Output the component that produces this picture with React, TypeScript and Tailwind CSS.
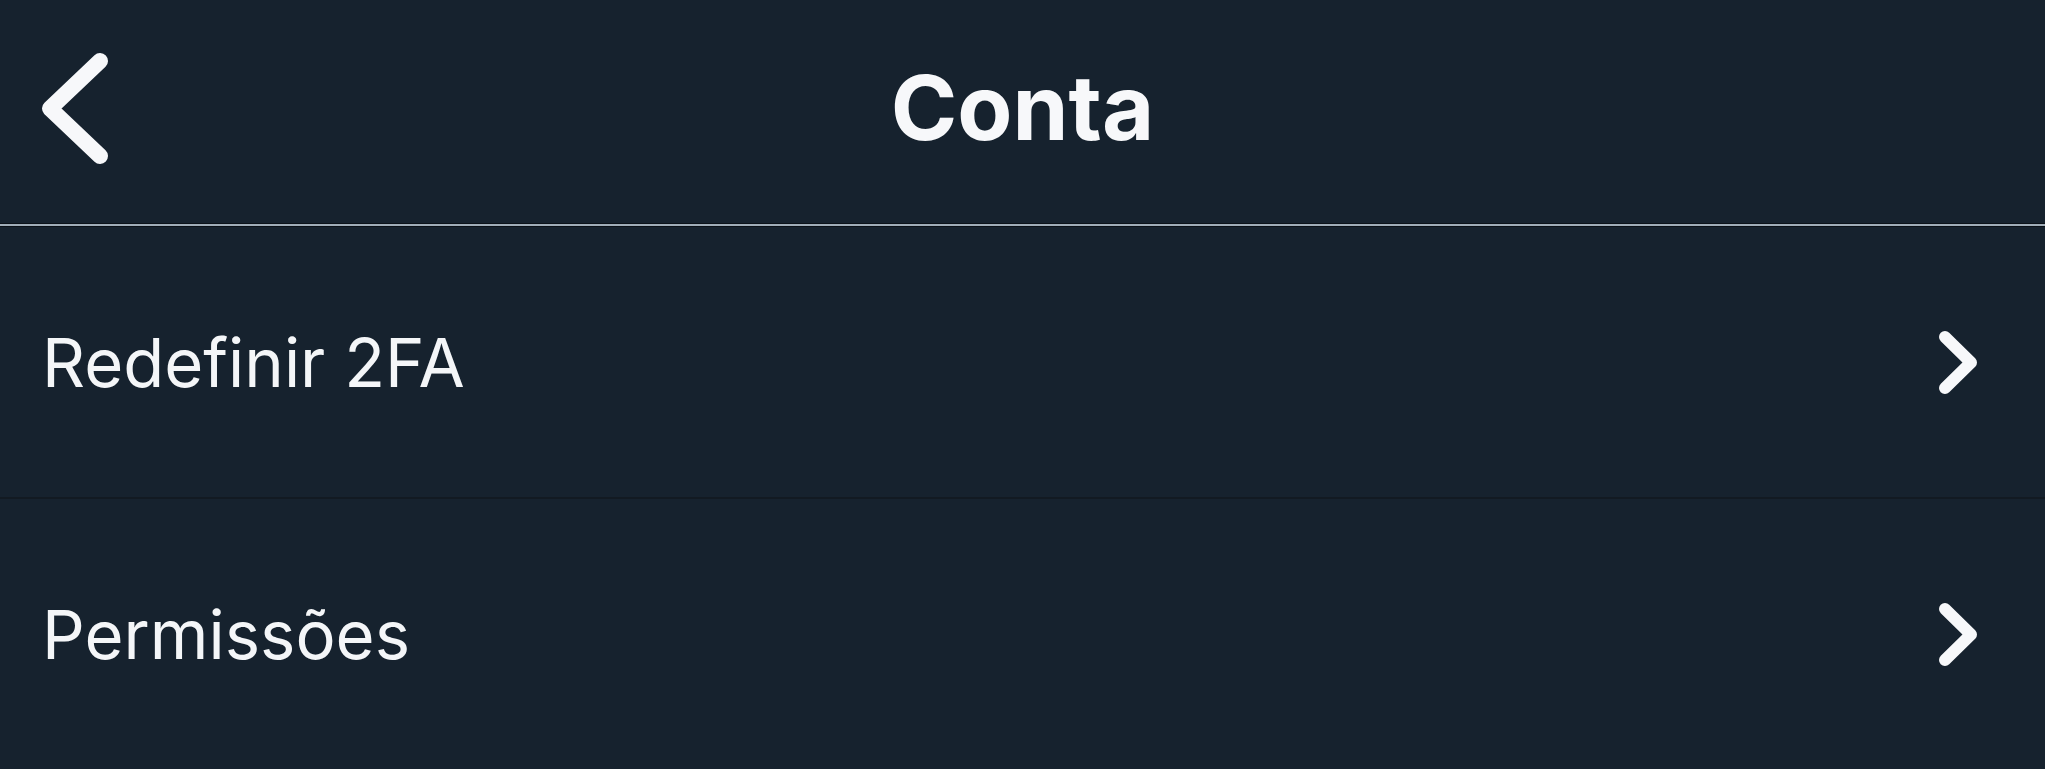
import React from "react";

function BackChevron() {
  return (
    <svg width="66" height="111" viewBox="0 0 66 111" fill="none" stroke="#f7f8fa" strokeWidth={16} strokeLinecap="round" strokeLinejoin="round">
      <path d="M58 8L8 55.5L58 103" />
    </svg>
  );
}

function RowChevron() {
  return (
    <svg width="38" height="63" viewBox="0 0 38 63" fill="none" stroke="#f7f8fa" strokeWidth={12} strokeLinecap="round" strokeLinejoin="round">
      <path d="M6 6L32 31.5L6 57" />
    </svg>
  );
}

function Row({ label }: { label: string }) {
  return (
    <div className="flex h-[270px] items-center justify-between pl-[42px] pr-[68px]">
      <span className="text-[67px] leading-none text-[#f4f6f8]">{label}</span>
      <RowChevron />
    </div>
  );
}

export default function App() {
  return (
    <div className="h-[769px] w-[2045px] overflow-hidden bg-[#16222e] font-['Inter','Liberation_Sans',sans-serif]">
      {/* Header */}
      <div className="grid h-[223px] grid-cols-[1fr_auto_1fr] items-center px-[42px] pb-[7px]">
        <div className="flex">
          <BackChevron />
        </div>
        <h1 className="text-[90px] font-bold leading-none text-[#f7f8fa]">Conta</h1>
        <div />
      </div>
      <div className="h-[1px] bg-[#0b1219]" />
      <div className="h-[2px] bg-[#a0adb8]" />
      <div className="h-[1px] bg-[#0b1219]" />

      {/* Rows */}
      <Row label="Redefinir 2FA" />
      <div className="h-[2px] bg-[#121a22]" />
      <Row label="Permissões" />
    </div>
  );
}
